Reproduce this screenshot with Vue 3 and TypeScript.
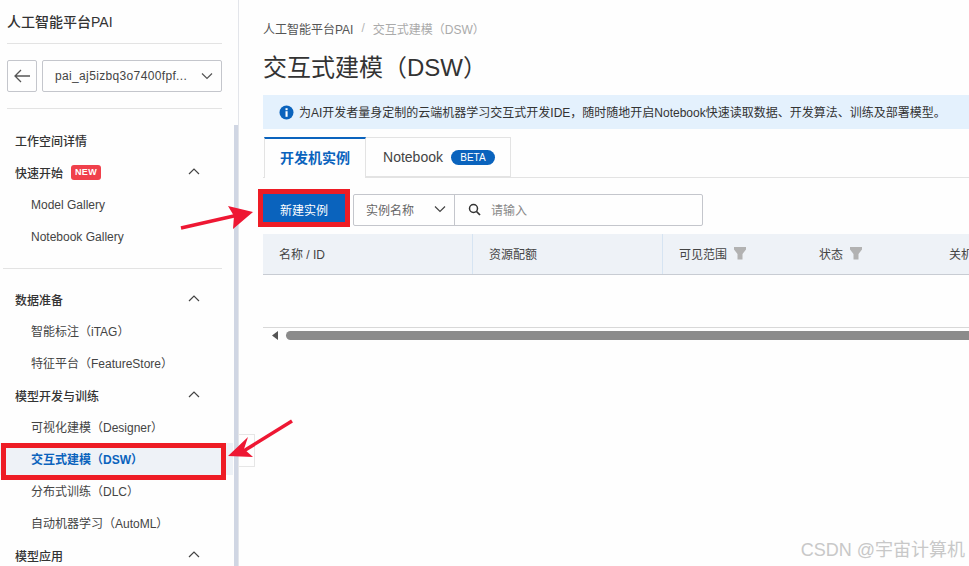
<script setup lang="ts">
interface NavItem { label: string; active?: boolean }
interface NavGroup { title: string; badge?: string; items: NavItem[] }

const quick: NavGroup = {
  title: '快速开始',
  badge: 'NEW',
  items: [{ label: 'Model Gallery' }, { label: 'Notebook Gallery' }],
}
const groups: NavGroup[] = [
  { title: '数据准备', items: [{ label: '智能标注（iTAG）' }, { label: '特征平台（FeatureStore）' }] },
  {
    title: '模型开发与训练',
    items: [
      { label: '可视化建模（Designer）' },
      { label: '交互式建模（DSW）', active: true },
      { label: '分布式训练（DLC）' },
      { label: '自动机器学习（AutoML）' },
    ],
  },
  { title: '模型应用', items: [] },
]
const columns = [
  { label: '名称 / ID', cls: 'c1', filter: false },
  { label: '资源配额', cls: 'c2', filter: false },
  { label: '可见范围', cls: 'c3', filter: true },
  { label: '状态', cls: 'c4', filter: true },
  { label: '关机', cls: 'c5', filter: false },
]
</script>

<template>
  <div class="page">
    <aside class="side">
      <div class="side-inner">
        <div class="brand">人工智能平台PAI</div>
        <div class="ws">
          <button class="back" aria-label="返回">
            <svg width="18" height="14" viewBox="0 0 18 14"><path d="M17 7H2M8 1L2 7l6 6" fill="none" stroke="#555" stroke-width="1.3"/></svg>
          </button>
          <div class="ws-select">
            <span class="ws-name">pai_aj5izbq3o7400fpf...</span>
            <svg width="12" height="8" viewBox="0 0 12 8"><path d="M1 1.5l5 5 5-5" fill="none" stroke="#555" stroke-width="1.2"/></svg>
          </div>
        </div>
        <div class="nav-head first">工作空间详情</div>
        <div class="nav-head">
          <span>快速开始</span><span class="new">NEW</span>
          <svg class="caret" width="12" height="7" viewBox="0 0 12 7"><path d="M1 6l5-5 5 5" fill="none" stroke="#444" stroke-width="1.2"/></svg>
        </div>
        <div v-for="i in quick.items" :key="i.label" class="nav-item">{{ i.label }}</div>
        <div class="nav-sep"></div>
        <template v-for="g in groups" :key="g.title">
          <div class="nav-head">
            <span>{{ g.title }}</span>
            <svg class="caret" width="12" height="7" viewBox="0 0 12 7"><path d="M1 6l5-5 5 5" fill="none" stroke="#444" stroke-width="1.2"/></svg>
          </div>
          <div v-for="i in g.items" :key="i.label" class="nav-item" :class="{ active: i.active }">{{ i.label }}</div>
        </template>
      </div>
      <div class="side-scroll"></div>
    </aside>

    <main class="main">
      <div class="crumb"><span>人工智能平台PAI</span><i>/</i><em>交互式建模（DSW）</em></div>
      <h1 class="title">交互式建模（DSW）</h1>
      <div class="alert">
        <svg width="15" height="15" viewBox="0 0 15 15"><circle cx="7.5" cy="7.5" r="7" fill="#0a63bd"/><rect x="6.500" y="6.200" width="2.100" height="5.600" fill="#fff"/><rect x="6.500" y="3.200" width="2.100" height="2" fill="#fff"/></svg>
        <span class="alert-text">为AI开发者量身定制的云端机器学习交互式开发IDE，随时随地开启Notebook快速读取数据、开发算法、训练及部署模型。</span>
      </div>
      <div class="tabs">
        <div class="tab on">开发机实例</div>
        <div class="tab">Notebook<span class="beta">BETA</span></div>
      </div>
      <div class="tools">
        <button class="primary">新建实例</button>
        <div class="search">
          <div class="kind">
            <span>实例名称</span>
            <svg width="12" height="8" viewBox="0 0 12 8"><path d="M1 1.5l5 5 5-5" fill="none" stroke="#444" stroke-width="1.2"/></svg>
          </div>
          <div class="query">
            <svg width="13" height="13" viewBox="0 0 13 13"><circle cx="5.500" cy="5.500" r="4" fill="none" stroke="#333" stroke-width="1.500"/><path d="M8.500 8.500l3.500 3.500" stroke="#333" stroke-width="1.700"/></svg>
            <span>请输入</span>
          </div>
        </div>
      </div>
      <div class="thead">
        <div v-for="c in columns" :key="c.label" class="th" :class="c.cls">
          <span>{{ c.label }}</span>
          <svg v-if="c.filter" width="12" height="13" viewBox="0 0 12 13"><path d="M0 0h12v2.500L8.500 7v5.500h-5V7L0 2.500z" fill="#b2b2b2"/></svg>
        </div>
      </div>
      <div class="tbody"></div>
      <div class="hscroll">
        <svg width="6" height="9" viewBox="0 0 6 9"><path d="M6 0v9L0 4.500z" fill="#555"/></svg>
        <div class="thumb"></div>
      </div>
    </main>

    <div class="collapse"></div>
    <div class="frame frame-nav"></div>
    <div class="frame frame-btn"></div>
    <svg class="marks" width="969" height="566" viewBox="0 0 969 566">
      <path d="M181 228L236 215.500" stroke="#ee1733" stroke-width="3.500" fill="none"/>
      <path d="M228 206L253 212L233 229L234 216z" fill="#ee1733"/>
      <path d="M292 421L242 452" stroke="#ee1733" stroke-width="3.500" fill="none"/>
      <path d="M228 456L248 437L244 449L253 457z" fill="#ee1733"/>
    </svg>
    <div class="mark-text">CSDN @宇宙计算机</div>
  </div>
</template>

<style>
html, body { margin: 0; background: #fff; overflow: hidden; }
</style>

<style scoped>
.page {
  position: relative;
  display: flex;
  width: 969px;
  height: 566px;
  overflow: hidden;
  background: #fefefe;
  color: #333;
  font-family: "Liberation Sans", "Noto Sans CJK SC", sans-serif;
  font-size: 12px;
}
.side {
  position: relative;
  flex: 0 0 239px;
  box-sizing: border-box;
  border-right: 1px solid #e3e5ea;
  overflow: hidden;
}
.side-inner { width: 222px; box-sizing: border-box; }
.brand {
  height: 44px;
  margin-left: 7px;
  box-sizing: border-box;
  border-bottom: 1px solid #e3e3e3;
  padding-top: 13px;
  font-size: 14px;
  line-height: 18px;
  font-weight: 500;
}
.ws {
  display: flex;
  gap: 5px;
  height: 65px;
  margin-left: 7px;
  box-sizing: border-box;
  padding-top: 16px;
  border-bottom: 1px solid #e3e3e3;
  margin-bottom: 15px;
}
.back {
  width: 30px;
  height: 32px;
  padding: 0;
  border: 1px solid #c4c6cc;
  border-radius: 2px;
  background: transparent;
  display: flex;
  align-items: center;
  justify-content: center;
}
.ws-select {
  flex: 1;
  height: 32px;
  box-sizing: border-box;
  border: 1px solid #c4c6cc;
  border-radius: 2px;
  display: flex;
  align-items: center;
  justify-content: space-between;
  padding: 0 8px 0 12px;
}
.ws-name { color: #444; font-size: 12px; letter-spacing: .35px; font-weight: 500; white-space: nowrap; }
.nav-head {
  position: relative;
  display: flex;
  align-items: center;
  height: 32px;
  padding-left: 15px;
  font-weight: 500;
  color: #333;
}
.caret { position: absolute; left: 188px; top: 12px; }
.new {
  margin-left: 8px;
  height: 15px;
  width: 30px;
  border-radius: 3px;
  background: #f0404b;
  color: #fff;
  font-size: 9px;
  font-weight: 700;
  line-height: 15px;
  text-align: center;
  letter-spacing: .3px;
}
.nav-item {
  height: 32px;
  line-height: 34px;
  padding-left: 31px;
  color: #444;
  white-space: nowrap;
}
.nav-item.active {
  margin-right: -11px;
  background: #eef2f7;
  color: #0a63bd;
  font-weight: 700;
}
.nav-sep {
  height: 1px;
  margin: 16px 0 14px 3px;
  background: #e3e3e3;
}
.side-scroll {
  position: absolute;
  left: 234px;
  top: 125px;
  bottom: 0;
  width: 4px;
  background: #d0d6e3;
}
.main {
  flex: 1;
  min-width: 0;
  padding: 19px 0 0 24px;
  overflow: hidden;
}
.crumb { display: flex; align-items: center; height: 18px; color: #555; white-space: nowrap; }
.crumb i { margin: 0 8px; font-style: normal; color: #b5b5b5; }
.crumb em { font-style: normal; color: #aaa; }
.title {
  margin: 14px 0 0;
  height: 34px;
  font-size: 24px;
  line-height: 34px;
  font-weight: 400;
  color: #333;
  white-space: nowrap;
}
.alert {
  display: flex;
  align-items: center;
  gap: 5px;
  margin-top: 10px;
  height: 34px;
  padding-left: 16px;
  background: #e4f1fd;
  color: #333;
  white-space: nowrap;
}
.alert-text { margin-bottom: 2px; }
.tabs {
  display: flex;
  margin-top: 8px;
  height: 41px;
  box-sizing: border-box;
  border-bottom: 1px solid #e3e3e3;
  padding-left: 1px;
}
.tab {
  display: flex;
  align-items: center;
  justify-content: center;
  box-sizing: border-box;
  width: 145px;
  height: 40px;
  padding-left: 2px;
  border: 1px solid #e3e3e3;
  border-left: 0;
  font-size: 14px;
  color: #444;
  white-space: nowrap;
}
.tab.on {
  width: 102px;
  padding: 0 0 4px;
  border-top: 2px solid #0a63bd;
  border-left: 1px solid #e3e3e3;
  border-bottom: 0;
  height: 41px;
  background: #fefefe;
  color: #0a63bd;
  font-size: 14px;
  font-weight: 700;
}
.beta {
  margin-left: 8px;
  width: 44px;
  height: 15px;
  border-radius: 8px;
  background: #0a63bd;
  color: #fff;
  font-size: 10px;
  line-height: 15px;
  text-align: center;
}
.tools { display: flex; gap: 8px; margin-top: 16px; }
.primary {
  width: 82px;
  height: 32px;
  padding: 0 0 2px;
  border: 0;
  background: #0a63bd;
  color: #fff;
  font: inherit;
  box-sizing: border-box;
}
.search {
  display: flex;
  width: 350px;
  height: 32px;
  box-sizing: border-box;
  border: 1px solid #c4c6cc;
  border-radius: 2px;
}
.kind {
  display: flex;
  align-items: center;
  justify-content: space-between;
  width: 101px;
  box-sizing: border-box;
  border-right: 1px solid #c4c6cc;
  padding: 0 8px 2px 12px;
  color: #666;
}
.query { display: flex; align-items: center; gap: 10px; padding: 0 0 2px 13px; color: #888; }
.thead {
  display: flex;
  margin-top: 8px;
  height: 41px;
  box-sizing: border-box;
  background: #eef2f7;
  border-bottom: 1px solid #c8ccd3;
  white-space: nowrap;
}
.th { display: flex; align-items: center; gap: 7px; box-sizing: border-box; padding: 0 0 2px 16px; color: #444; flex: none; }
.c1 { width: 210px; border-right: 1px solid #d6e4f2; }
.c2 { width: 190px; border-right: 1px solid #d6e4f2; }
.c3 { width: 140px; }
.c4 { width: 130px; }
.c5 { width: 60px; }
.tbody { height: 52px; border-bottom: 1px solid #d8d8d8; }
.hscroll { display: flex; align-items: center; gap: 8px; height: 9px; margin-top: 3px; padding-left: 9px; }
.thumb { flex: 1; height: 9px; border-radius: 5px 0 0 5px; background: #8b8b8b; }
.collapse {
  position: absolute;
  left: 238px;
  top: 434px;
  width: 17px;
  height: 33px;
  box-sizing: border-box;
  border: 1px solid #e6e6e6;
  border-left: 0;
}
.frame { position: absolute; box-sizing: border-box; border: 5px solid #ee1c25; }
.frame-nav { left: 1px; top: 443px; width: 225px; height: 37px; }
.frame-btn { left: 258px; top: 189px; width: 92px; height: 38px; }
.marks { position: absolute; left: 0; top: 0; pointer-events: none; }
.mark-text {
  position: absolute;
  right: 4px;
  top: 539px;
  font-size: 18px;
  line-height: 22px;
  color: #c8c8c8;
  white-space: nowrap;
}
</style>
